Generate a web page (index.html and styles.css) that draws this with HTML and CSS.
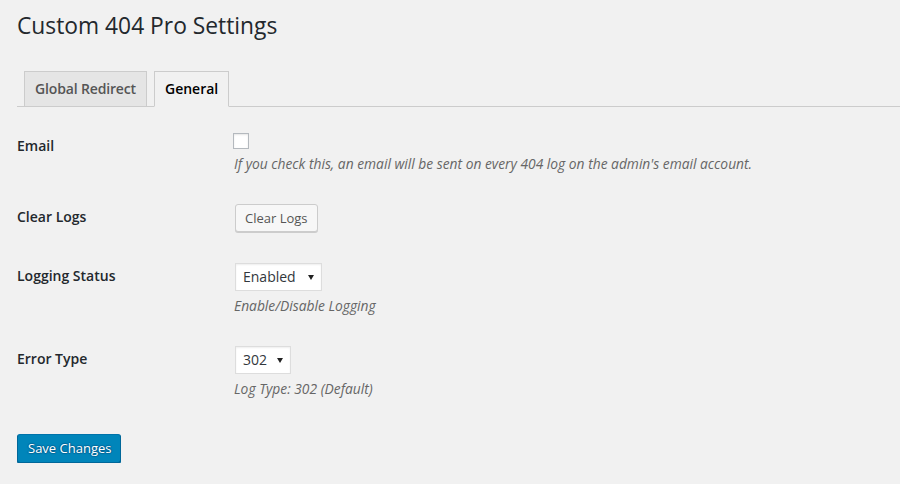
FILE: index.html
```html
<!DOCTYPE html>
<html lang="en">
<head>
<meta charset="utf-8">
<title>Custom 404 Pro Settings</title>
<link rel="stylesheet" href="styles.css">
</head>
<body>
<div class="wrap">
  <h1 class="page-title">Custom 404 Pro Settings</h1>
  <nav class="tabs">
    <a class="tab" href="#">Global Redirect</a>
    <a class="tab tab-active" href="#">General</a>
  </nav>
  <form class="form">
    <div class="row">
      <div class="label">Email</div>
      <div class="field">
        <span class="checkbox"></span>
        <p class="description">If you check this, an email will be sent on every 404 log on the admin's email account.</p>
      </div>
    </div>
    <div class="row">
      <div class="label">Clear Logs</div>
      <div class="field">
        <button type="button" class="button">Clear Logs</button>
      </div>
    </div>
    <div class="row">
      <div class="label">Logging Status</div>
      <div class="field">
        <div class="select select-status">
          <span>Enabled</span>
          <svg class="arrow" width="6" height="5" viewBox="0 0 6 5"><polygon points="0,0 6,0 3,5" fill="#222"/></svg>
        </div>
        <p class="description">Enable/Disable Logging</p>
      </div>
    </div>
    <div class="row">
      <div class="label">Error Type</div>
      <div class="field">
        <div class="select select-type">
          <span>302</span>
          <svg class="arrow" width="6" height="5" viewBox="0 0 6 5"><polygon points="0,0 6,0 3,5" fill="#222"/></svg>
        </div>
        <p class="description">Log Type: 302 (Default)</p>
      </div>
    </div>
    <div class="submit">
      <button type="button" class="button button-primary">Save Changes</button>
    </div>
  </form>
</div>
</body>
</html>
```

FILE: styles.css
```css
* { box-sizing: border-box; }

html, body {
  margin: 0;
  padding: 0;
  background: #f1f1f1;
}

body {
  font-family: "Open Sans", "Noto Sans", sans-serif;
  color: #23282d;
  font-size: 13px;
}

.wrap {
  padding: 0 0 0 17px;
}

.page-title {
  margin: 11px 0 0;
  font-size: 22.8px;
  line-height: 29.9px;
  font-weight: 400;
  color: #23282d;
}

.tabs {
  margin-top: 30px;
  display: flex;
  border-bottom: 1px solid #ccc;
  padding-left: 7px;
  gap: 7px;
}

.tab {
  display: block;
  padding: 5px 10px;
  font-size: 14px;
  line-height: 24px;
  font-weight: 600;
  letter-spacing: -0.15px;
  color: #555;
  background: #e5e5e5;
  border: 1px solid #ccc;
  margin-bottom: -1px;
  text-decoration: none;
}

.tab-active {
  background: #f1f1f1;
  color: #000;
  border-bottom-color: #f1f1f1;
  letter-spacing: 0;
}

.form {
  margin-top: 26px;
  display: flex;
  flex-direction: column;
  gap: 31px;
}

.row {
  display: grid;
  grid-template-columns: 217px 1fr;
  align-items: start;
}

.label {
  padding-top: 4px;
  font-size: 14px;
  line-height: 18.2px;
  font-weight: 600;
  color: #23282d;
}

.field {
  display: flex;
  flex-direction: column;
  align-items: flex-start;
}

.checkbox {
  display: block;
  width: 16px;
  height: 16px;
  margin-left: -1px;
  border: 1px solid #b4b9be;
  background: #fff;
  box-shadow: inset 0 1px 2px rgba(0,0,0,.1);
}

.description {
  margin: 6px 0 0;
  font-size: 13.8px;
  line-height: 18px;
  font-style: italic;
  color: #666;
}

.button {
  display: inline-block;
  margin: 0 0 0 1px;
  height: 28px;
  padding: 0 9px 1px;
  font-family: "Open Sans", "Noto Sans", sans-serif;
  font-size: 13px;
  line-height: 26px;
  color: #555;
  background: #f7f7f7;
  border: 1px solid #ccc;
  border-radius: 3px;
  box-shadow: 0 1px 0 #ccc;
  white-space: nowrap;
  cursor: pointer;
}

.select {
  margin-left: 1px;
  height: 28px;
  display: flex;
  align-items: center;
  justify-content: space-between;
  padding: 0 7px 0 7px;
  background: #fff;
  border: 1px solid #ddd;
  box-shadow: inset 0 1px 2px rgba(0,0,0,.07);
  font-size: 14px;
  line-height: 26px;
  color: #32373c;
}

.select-status { width: 87px; }
.select-type { width: 56px; }

.arrow {
  display: block;
  margin-top: 1px;
}

.submit {
  margin-top: 5px;
}

.button-primary {
  margin-left: 0;
  height: 29px;
  width: 104px;
  padding: 0 10px 1px;
  line-height: 26px;
  background: #0085ba;
  border-color: #0073aa #006799 #006799;
  box-shadow: 0 1px 0 #006799;
  color: #fff;
  text-shadow: 0 -1px 1px #006799, 1px 0 1px #006799, 0 1px 1px #006799, -1px 0 1px #006799;
}
```
